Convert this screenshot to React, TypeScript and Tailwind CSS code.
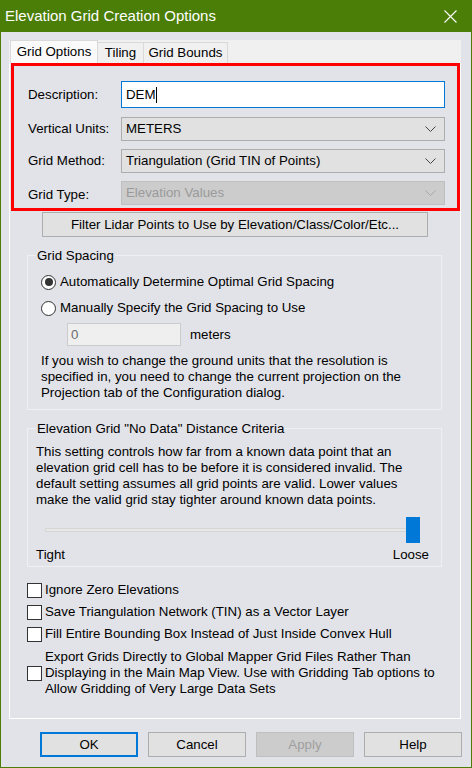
import React from "react";

const font = "font-['Liberation_Sans',Arial,sans-serif]";

function Chevron(props: { color: string }) {
  return (
    <svg width="11" height="7" viewBox="0 0 11 7" className="mr-[8px]">
      <polyline points="0.5,0.5 5.5,5.5 10.5,0.5" fill="none" stroke={props.color} strokeWidth="1" />
    </svg>
  );
}

function Select(props: { value: string; disabled?: boolean }) {
  return (
    <div
      className={
        props.disabled
          ? "w-[324px] h-[24px] flex items-center justify-between pl-[4px] bg-[#cccccc] border border-[#bfbfbf] text-[#9a9a9a]"
          : "w-[324px] h-[24px] flex items-center justify-between pl-[4px] bg-[#e1e1e1] border border-[#adadad] text-black"
      }
    >
      <span>{props.value}</span>
      <Chevron color={props.disabled ? "#a8a8a8" : "#444444"} />
    </div>
  );
}

function Checkbox(props: { children: React.ReactNode }) {
  return (
    <div className="flex items-center ml-[17px]">
      <div className="w-[15px] h-[15px] border border-[#333333] bg-white shrink-0" />
      <div className="ml-[3px] leading-[16px]">{props.children}</div>
    </div>
  );
}

function Button(props: { label: string; kind?: "default" | "disabled" }) {
  let cls = "w-[98px] h-[25px] flex items-center justify-center bg-[#e1e1e1] border border-[#adadad] text-black";
  if (props.kind === "default") cls = "w-[98px] h-[25px] flex items-center justify-center bg-[#e1e1e1] border-2 border-[#0078d7] text-black";
  if (props.kind === "disabled") cls = "w-[98px] h-[25px] flex items-center justify-center bg-[#cccccc] border border-[#bfbfbf] text-[#9f9f9f]";
  return <div className={cls}>{props.label}</div>;
}

export default function App() {
  return (
    <div className={`w-[472px] h-[768px] flex flex-col bg-[#4b7e07] text-[13.3px] ${font}`}>
      {/* TITLE BAR */}
      <div className="h-[32px] flex items-center justify-between pl-[5px] pr-[15px] text-white">
        <span className="text-[15px]">Elevation Grid Creation Options</span>
        <svg width="13" height="13" viewBox="0 0 13 13">
          <path d="M0.5 0.5 L12.5 12.5 M12.5 0.5 L0.5 12.5" stroke="#ffffff" strokeWidth="1.1" />
        </svg>
      </div>

      {/* BODY */}
      <div className="flex-1 mx-[1px] mb-[1px] bg-[#e2e3e8] pt-[8px] flex flex-col">
        <div className="ml-[8px] w-[452px] bg-[#f0f0f0]">
          {/* TABS */}
          <div className="h-[23px] flex items-end pl-[1px]">
            <div className="w-[88px] h-[23px] bg-[#fafafa] border border-b-0 border-[#d9d9d9] flex items-center justify-center">
              Grid Options
            </div>
            <div className="w-[46px] h-[21px] bg-[#f0f0f0] border border-l-0 border-b-0 border-[#d9d9d9] flex items-center justify-center">
              Tiling
            </div>
            <div className="w-[84px] h-[21px] bg-[#f0f0f0] border border-l-0 border-b-0 border-[#d9d9d9] flex items-center justify-center">
              Grid Bounds
            </div>
          </div>

          {/* PANEL */}
          <div className="h-[656px] bg-[#e2e3e8] border border-t-0 border-white flex flex-col">
            {/* highlighted block */}
            <div className="ml-[1px] border-[3px] border-[#ff0000] pt-[15px] pb-[3px] pl-[14px] flex flex-col">
              <div className="flex items-center h-[27px]">
                <span className="w-[93px]">Description:</span>
                <div className="w-[324px] h-[27px] bg-white border border-[#0078d7] flex items-center pl-[4px]">
                  DEM<span className="w-[1px] h-[16px] bg-black" />
                </div>
              </div>
              <div className="flex items-center mt-[9px]">
                <span className="w-[93px]">Vertical Units:</span>
                <Select value="METERS" />
              </div>
              <div className="flex items-center mt-[8px]">
                <span className="w-[93px]">Grid Method:</span>
                <Select value="Triangulation (Grid TIN of Points)" />
              </div>
              <div className="flex items-center mt-[8px]">
                <span className="w-[93px] pt-[4px]">Grid Type:</span>
                <Select value="Elevation Values" disabled />
              </div>
            </div>

            <div className="ml-[32px] mt-[1px] w-[386px] h-[25px] bg-[#e1e1e1] border border-[#adadad] flex items-center justify-center">
              Filter Lidar Points to Use by Elevation/Class/Color/Etc...
            </div>

            {/* GRID SPACING */}
            <div className="ml-[17px] mt-[18px] w-[415px] border border-[#efeff2] pb-[8px]">
              <div className="-mt-[8px] ml-[8px] w-fit px-[1px] leading-[16px] bg-[#e2e3e8]">Grid Spacing</div>
              <div className="mt-[10px] ml-[13px] flex items-center h-[16px]">
                <div className="w-[15px] h-[15px] rounded-full border border-[#333333] bg-white flex items-center justify-center">
                  <div className="w-[8px] h-[8px] rounded-full bg-[#333333]" />
                </div>
                <span className="ml-[4px]">Automatically Determine Optimal Grid Spacing</span>
              </div>
              <div className="mt-[10px] ml-[13px] flex items-center h-[16px]">
                <div className="w-[15px] h-[15px] rounded-full border border-[#333333] bg-white" />
                <span className="ml-[4px]">Manually Specify the Grid Spacing to Use</span>
              </div>
              <div className="mt-[7px] ml-[39px] flex items-center">
                <div className="w-[114px] h-[23px] bg-[#efefef] border border-[#cccccc] flex items-center pl-[3px] text-[#6d6d6d]">
                  0
                </div>
                <span className="ml-[9px]">meters</span>
              </div>
              <p className="mt-[7px] ml-[13px] leading-[16px]">
                If you wish to change the ground units that the resolution is<br />
                specified in, you need to change the current projection on the<br />
                Projection tab of the Configuration dialog.
              </p>
            </div>

            {/* NO DATA */}
            <div className="ml-[17px] mt-[18px] w-[415px] border border-[#efeff2] pb-[3px]">
              <div className="-mt-[8px] ml-[8px] w-fit px-[1px] leading-[16px] bg-[#e2e3e8]">
                Elevation Grid "No Data" Distance Criteria
              </div>
              <p className="mt-[7px] ml-[8px] leading-[16px]">
                This setting controls how far from a known data point that an<br />
                elevation grid cell has to be before it is considered invalid. The<br />
                default setting assumes all grid points are valid. Lower values<br />
                make the valid grid stay tighter around known data points.
              </p>
              <div className="mt-[9px] ml-[17px] w-[375px] h-[26px] flex items-center">
                <div className="flex-1 h-[4px] bg-[#e7e7e7] border border-[#d6d6d6]" />
                <div className="-ml-[14px] w-[14px] h-[26px] bg-[#0078d7]" />
              </div>
              <div className="mt-[4px] ml-[8px] mr-[12px] flex justify-between leading-[16px]">
                <span>Tight</span>
                <span>Loose</span>
              </div>
            </div>

            {/* CHECKBOXES */}
            <div className="mt-[15px] flex flex-col gap-[6px]">
              <Checkbox>Ignore Zero Elevations</Checkbox>
              <Checkbox>Save Triangulation Network (TIN) as a Vector Layer</Checkbox>
              <Checkbox>Fill Entire Bounding Box Instead of Just Inside Convex Hull</Checkbox>
              <div className="mt-[1px]">
                <Checkbox>
                  Export Grids Directly to Global Mapper Grid Files Rather Than<br />
                  Displaying in the Main Map View. Use with Gridding Tab options to<br />
                  Allow Gridding of Very Large Data Sets
                </Checkbox>
              </div>
            </div>
          </div>
        </div>

        {/* FOOTER BUTTONS */}
        <div className="mt-[13px] ml-[39px] flex gap-[10px]">
          <Button label="OK" kind="default" />
          <Button label="Cancel" />
          <Button label="Apply" kind="disabled" />
          <Button label="Help" />
        </div>
      </div>
    </div>
  );
}
